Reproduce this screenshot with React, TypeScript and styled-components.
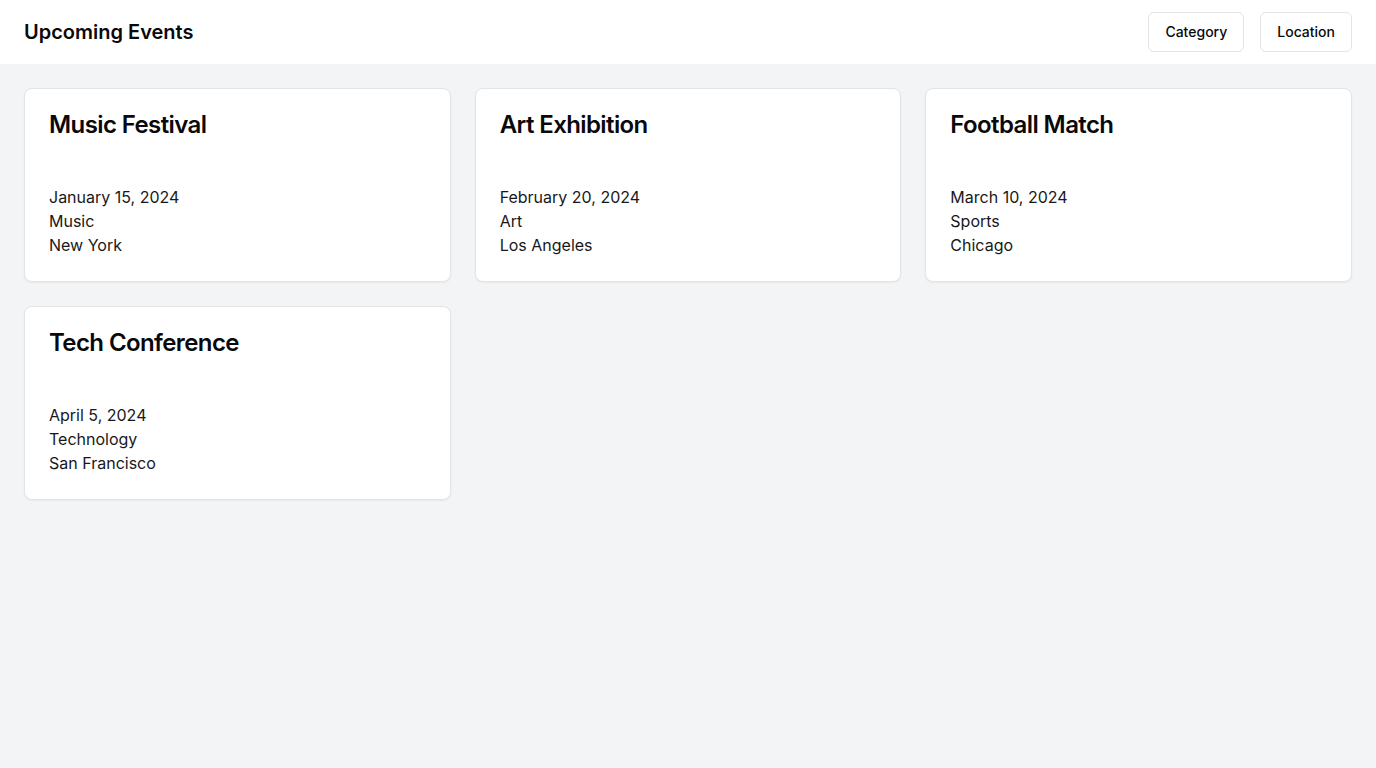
import styled, { createGlobalStyle } from "styled-components";

const GlobalStyle = createGlobalStyle`
    * {
        box-sizing: border-box;
    }
    body {
        margin: 0;
        font-family: Inter, "Liberation Sans", sans-serif;
        background: #f3f4f6;
        color: #111827;
    }
`;

const Header = styled.header`
    height: 64px;
    background: #fff;
    display: flex;
    align-items: center;
    justify-content: space-between;
    padding: 0 24px;
`;

const Title = styled.h1`
    margin: 0;
    font-size: 20px;
    line-height: 28px;
    font-weight: 600;
    color: #09090b;
`;

const Filters = styled.div`
    display: flex;
    gap: 16px;
`;

const FilterButton = styled.button`
    height: 40px;
    padding: 0 16px 1px;
    background: #fff;
    border: 1px solid #e4e4e7;
    border-radius: 6px;
    font-family: inherit;
    font-size: 14px;
    line-height: 20px;
    font-weight: 500;
    color: #09090b;
`;

const Grid = styled.main`
    display: grid;
    grid-template-columns: repeat(3, 1fr);
    gap: 24px;
    padding: 24px;
`;

const Card = styled.div`
    background: #fff;
    border: 1px solid #e4e4e7;
    border-radius: 8px;
    box-shadow: 0 1px 2px rgba(0, 0, 0, 0.05);
    padding: 24px;
`;

const CardTitle = styled.h2`
    margin: 0 0 48px;
    font-size: 24px;
    line-height: 24px;
    font-weight: 600;
    letter-spacing: -0.6px;
    color: #09090b;
`;

const Detail = styled.p`
    margin: 0;
    font-size: 16px;
    line-height: 24px;
    color: #18181b;
`;

const events = [
    { name: "Music Festival", date: "January 15, 2024", category: "Music", location: "New York" },
    { name: "Art Exhibition", date: "February 20, 2024", category: "Art", location: "Los Angeles" },
    { name: "Football Match", date: "March 10, 2024", category: "Sports", location: "Chicago" },
    { name: "Tech Conference", date: "April 5, 2024", category: "Technology", location: "San Francisco" },
];

export default function App() {
    return (
        <>
            <GlobalStyle />
            <Header>
                <Title>Upcoming Events</Title>
                <Filters>
                    <FilterButton>Category</FilterButton>
                    <FilterButton>Location</FilterButton>
                </Filters>
            </Header>
            <Grid>
                {events.map((e) => (
                    <Card key={e.name}>
                        <CardTitle>{e.name}</CardTitle>
                        <Detail>{e.date}</Detail>
                        <Detail>{e.category}</Detail>
                        <Detail>{e.location}</Detail>
                    </Card>
                ))}
            </Grid>
        </>
    );
}
